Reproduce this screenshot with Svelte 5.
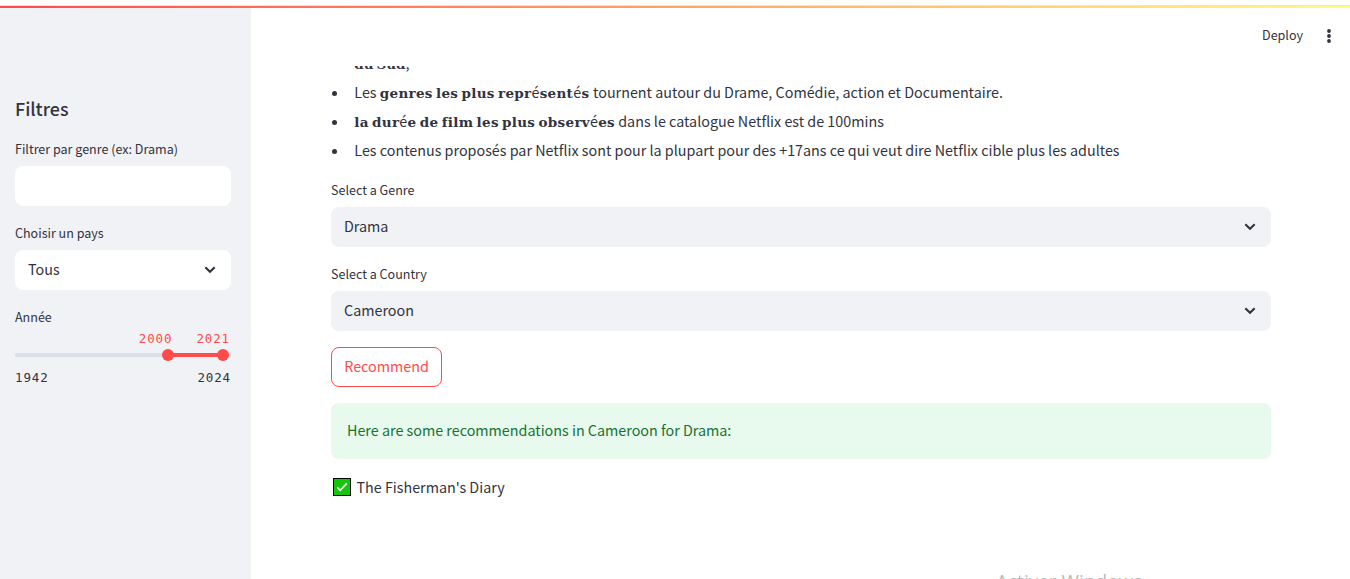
<script>
  const selects = [
    { label: 'Select a Genre', value: 'Drama' },
    { label: 'Select a Country', value: 'Cameroon' }
  ];
</script>

{#snippet chevron()}
  <svg class="chevron" viewBox="0 0 12 8" aria-hidden="true"><path d="M1.3 1.2 6 5.8 10.7 1.2" /></svg>
{/snippet}

<div class="app">
  <div class="top"><div class="stripe"></div></div>
  <div class="body">
    <aside>
      <h3>Filtres</h3>
      <div class="label">Filtrer par genre (ex: Drama)</div>
      <input class="field" aria-label="Filtrer par genre (ex: Drama)" />
      <div class="label next">Choisir un pays</div>
      <div class="field select"><span>Tous</span>{@render chevron()}</div>
      <div class="label next last">Année</div>
      <div class="slider">
        <div class="values"><span>2000</span><span>2021</span></div>
        <div class="track"><i class="range"></i><i class="thumb low"></i><i class="thumb high"></i></div>
        <div class="bounds"><span>1942</span><span>2024</span></div>
      </div>
    </aside>
    <main>
      <header><span>Deploy</span>
        <svg viewBox="0 0 4 14" class="dots"><circle cx="2" cy="2" r="1.9" /><circle cx="2" cy="7" r="1.9" /><circle cx="2" cy="12" r="1.9" /></svg>
      </header>
      <div class="scroll">
        <ul>
          <li class="cut"><b>du Sud</b>,</li>
          <li>Les <b class="genres">genres les plus repr<em>é</em>sent<em>é</em>s</b> tournent autour du Drame, Comédie, action et Documentaire.</li>
          <li><b>la dur<em>é</em>e de film les plus observ<em>é</em>es</b> dans le catalogue Netflix est de 100mins</li>
          <li>Les contenus proposés par Netflix sont pour la plupart pour des +17ans ce qui veut dire Netflix cible plus les adultes</li>
        </ul>
        {#each selects as s}
          <div class="label">{s.label}</div>
          <div class="field select wide"><span>{s.value}</span>{@render chevron()}</div>
        {/each}
        <button>Recommend</button>
        <div class="success">Here are some recommendations in Cameroon for Drama:</div>
        <div class="result">
          <svg viewBox="0 0 18 18"><rect x=".5" y=".5" width="17" height="17" /><path d="m4.2 9.4 3 3 6.6-7" /></svg>
          <span>The Fisherman's Diary</span>
        </div>
      </div>
    </main>
  </div>
  <div class="watermark">Activer Windows</div>
</div>

<style>
  :global(body) { background: #fff; overflow: hidden; }
  * { box-sizing: border-box; }
  .app { position: relative; width: 1350px; height: 579px; overflow: hidden; color: #31333f; font: 14.34px/29px "Noto Sans CJK SC", sans-serif; }
  .top { height: 8px; padding-top: 5px; }
  .stripe { height: 3px; border-top: 1px solid #e4e4e4; background: linear-gradient(90deg, #ff4b4b, #fffd80) padding-box; }
  .body { display: flex; height: 571px; }
  aside { width: 251px; padding: 85px 20px 0 15px; background: #f0f2f6; }
  h3 { margin: 0 0 15px; height: 31px; font-size: 17.9px; line-height: 31px; font-weight: 500; }
  .label { height: 20px; margin-bottom: 7px; font-size: 12.54px; line-height: 20px; white-space: nowrap; }
  .field { display: block; width: 100%; height: 40px; border: 0; border-radius: 8px; background: #fff; }
  .label.next { margin-top: 17px; }
  .label.last { margin-bottom: 2px; }
  .select { display: flex; align-items: center; justify-content: space-between; padding: 0 15px 0 13px; line-height: 24px; }
  .select span { padding-bottom: 2px; }
  .wide { background: #f0f2f6; margin-bottom: 17px; }
  .chevron { width: 12px; height: 8px; fill: none; stroke: #31333f; stroke-width: 2.1; }
  .slider { font: 12.5px/20px "DejaVu Sans Mono", monospace; letter-spacing: .87px; }
  .values { display: flex; justify-content: flex-end; gap: 24px; height: 20px; padding-right: 1px; color: #ff4b4b; }
  .track { position: relative; height: 4px; margin-top: 4px; border-radius: 2px; background: #dadfe8; }
  .range { position: absolute; left: 153px; width: 55px; height: 4px; background: #ff4b4b; }
  .thumb { position: absolute; top: -4px; width: 12px; height: 12px; border-radius: 50%; background: #ff4b4b; }
  .low { left: 147px; }
  .high { left: 202px; }
  .bounds { display: flex; justify-content: space-between; margin-top: 11px; }
  main { flex: 1; padding: 0 79px 0 80px; }
  header { display: flex; align-items: center; justify-content: flex-end; gap: 24px; height: 58px; padding-bottom: 3px; margin-right: -60px; font-size: 12.54px; }
  header span { padding-bottom: 2px; }
  .dots { width: 4px; height: 14px; fill: #31333f; }
  .scroll { height: 513px; overflow: hidden; }
  ul { margin: -18px 0 16px; padding: 0; list-style: none; }
  li { height: 29px; white-space: nowrap; }
  li::before { content: ""; display: inline-block; width: 5px; height: 5px; margin: 0 17.3px 2.5px 1px; border-radius: 50%; background: #31333f; }
  .cut::before { background: none; }
  b { font: bold 13.5px/20px "DejaVu Serif", serif; word-spacing: -1.7px; letter-spacing: .3px; }
  .cut b { letter-spacing: 0; }
  .genres { letter-spacing: .3px; margin-right: .5px; }
  em { font: 14.35px/20px "Noto Sans CJK SC", sans-serif; }
  button { display: block; width: 111px; height: 40px; margin-top: -1px; padding: 0 0 2px; border: 1px solid #ff4b4b; border-radius: 8px; background: #fff; color: #ff4b4b; font: inherit; line-height: 24px; }
  .success { height: 56px; margin-top: 16px; padding: 15px 16px; border-radius: 8px; background: #e8f9ee; color: #177233; line-height: 24px; }
  .result { display: flex; align-items: center; gap: 5.5px; height: 26px; margin-top: 15px; padding-left: 2px; }
  .result span { padding-bottom: 2px; }
  .result svg { width: 18px; height: 18px; }
  rect { fill: #16c60c; stroke: #000; stroke-width: 1; }
  .result path { fill: none; stroke: #fff; stroke-width: 1.6; }
  .watermark { position: absolute; left: 996px; top: 568px; color: #b9b9b9; font: 19px/26px "Open Sans", sans-serif; white-space: nowrap; }
</style>
